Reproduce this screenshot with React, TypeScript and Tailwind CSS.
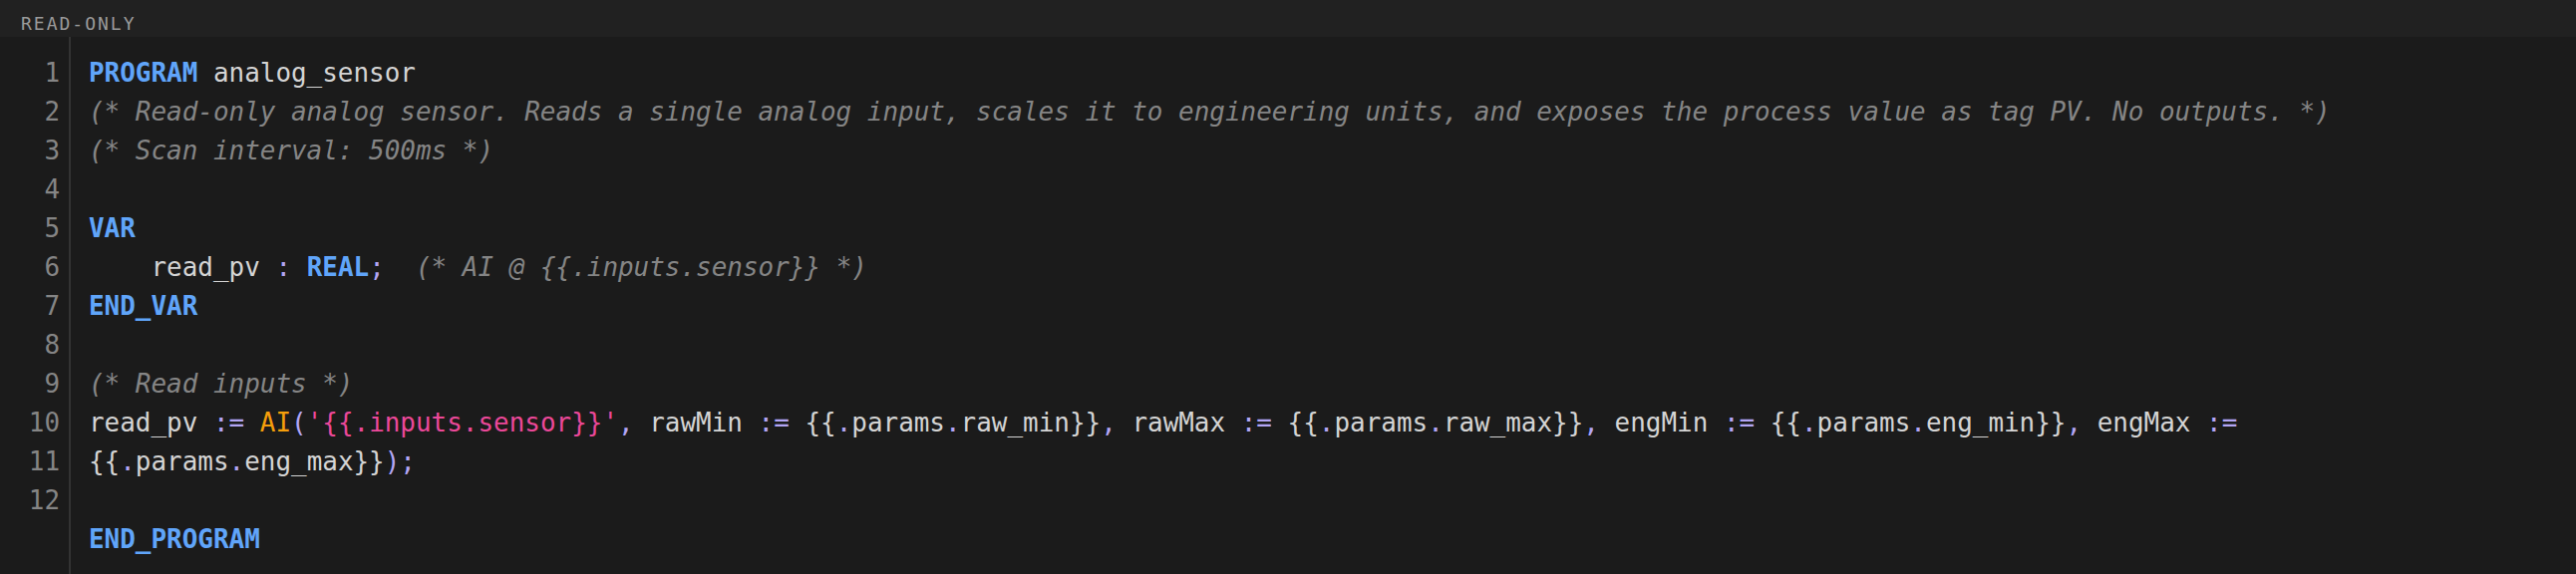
import type { ReactNode } from "react"

const mono = "font-['DejaVu_Sans_Mono','Liberation_Mono',monospace]"

const K = ({ children }: { children: ReactNode }) => <span className="font-bold text-[#60a5fa]">{children}</span>
const C = ({ children }: { children: ReactNode }) => <span className="italic text-[#858585]">{children}</span>
const O = ({ children }: { children: ReactNode }) => <span className="text-[#b3a6f5]">{children}</span>
const F = ({ children }: { children: ReactNode }) => <span className="text-[#f59e0b]">{children}</span>
const S = ({ children }: { children: ReactNode }) => <span className="text-[#ec4899]">{children}</span>

const lines: ReactNode[] = [
  <>
    <K>PROGRAM</K> analog_sensor
  </>,
  <C>(* Read-only analog sensor. Reads a single analog input, scales it to engineering units, and exposes the process value as tag PV. No outputs. *)</C>,
  <C>(* Scan interval: 500ms *)</C>,
  "",
  <K>VAR</K>,
  <>
    {"    read_pv "}
    <O>:</O> <K>REAL</K>
    <O>;</O>
    {"  "}
    <C>(* AI @ {"{{.inputs.sensor}}"} *)</C>
  </>,
  <K>END_VAR</K>,
  "",
  <C>(* Read inputs *)</C>,
  <>
    read_pv <O>:=</O> <F>AI</F>
    <O>(</O>
    <S>'{"{{.inputs.sensor}}"}'</S>
    <O>,</O> rawMin <O>:=</O> {"{{"}
    <O>.</O>params<O>.</O>raw_min{"}}"}
    <O>,</O> rawMax <O>:=</O> {"{{"}
    <O>.</O>params<O>.</O>raw_max{"}}"}
    <O>,</O> engMin <O>:=</O> {"{{"}
    <O>.</O>params<O>.</O>eng_min{"}}"}
    <O>,</O> engMax <O>:=</O> {"{{"}
    <O>.</O>params<O>.</O>eng_max{"}}"}
    <O>);</O>
  </>,
  "",
  <K>END_PROGRAM</K>,
]

export default function App() {
  return (
    <div className={`h-[576px] w-full bg-[#1b1b1b] flex flex-col overflow-hidden ${mono}`}>
      {/* Header */}
      <div className="h-[37px] shrink-0 bg-[#212121] pl-[21px] pt-[15px] text-[18px] leading-none tracking-[2px] text-[#9a9a9a]">
        READ-ONLY
      </div>

      {/* Editor */}
      <div className="flex flex-1 min-h-0 text-[25.95px] leading-[39px]">
        <div className="w-[71px] shrink-0 border-r-2 border-[#333333] pt-[17px] pr-[9px] text-right text-[#858585]">
          {Array.from({ length: 12 }, (_, i) => (
            <div key={i} className="h-[39px]">
              {i + 1}
            </div>
          ))}
        </div>
        <div className="flex-1 min-w-0 pt-[17px] pl-[18px] pr-4 text-[#d4d4d4]">
          {lines.map((line, i) => (
            <div key={i} className="min-h-[39px] whitespace-pre-wrap break-words">
              {line}
            </div>
          ))}
        </div>
      </div>
    </div>
  )
}
